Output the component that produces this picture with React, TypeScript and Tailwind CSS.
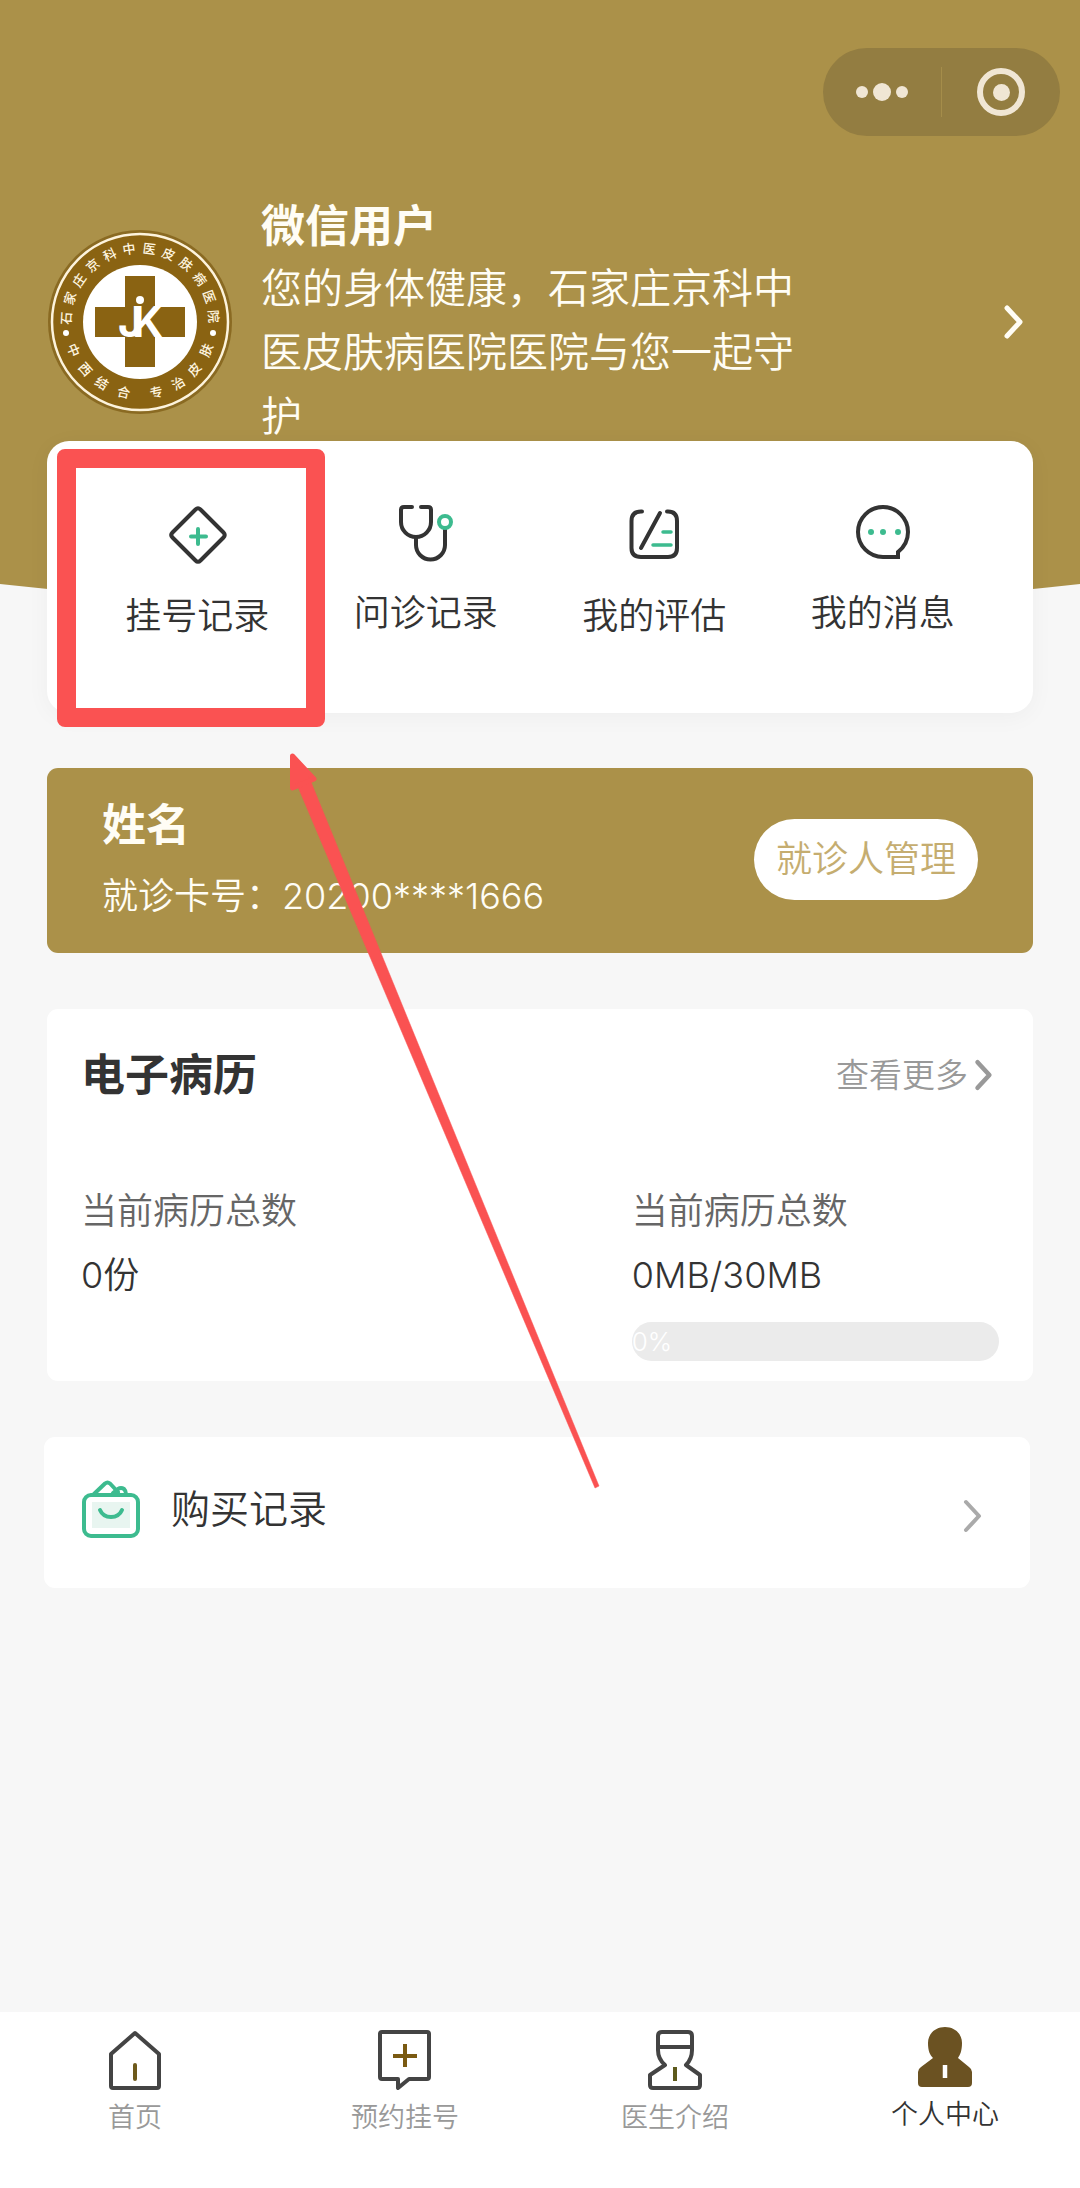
import type { ReactNode } from "react";

const INK = "#333333";
const GREEN = "#3dbb8f";

const TOP_RING = ["石", "家", "庄", "京", "科", "中", "医", "皮", "肤", "病", "医", "院"];
const BOTTOM_RING: [string, number][] = [
  ["中", 67],
  ["西", 49],
  ["结", 32],
  ["合", 13],
  ["专", -13],
  ["治", -32],
  ["皮", -49],
  ["肤", -67],
];

function HospitalLogo() {
  return (
    <svg viewBox="-92 -92 184 184" className="size-[184px] shrink-0" role="img" aria-label="石家庄京科中医皮肤病医院">
      <circle r="92" fill="#8a6a22" />
      <circle r="88" fill="#8a6312" stroke="#fdf3dc" strokeWidth="2.5" />
      <g fill="#fff6e0" fontSize="13" fontWeight="500" textAnchor="middle" fontFamily='"Noto Sans CJK SC", sans-serif'>
        {TOP_RING.map((ch, i) => (
          <text key={i} transform={`rotate(${-87 + i * 15.7})`} y="-69">
            {ch}
          </text>
        ))}
        {BOTTOM_RING.map(([ch, angle]) => (
          <text key={angle} transform={`rotate(${angle})`} y="77">
            {ch}
          </text>
        ))}
      </g>
      <circle cx="-74" cy="11" r="3" fill="#fff" />
      <circle cx="73" cy="11" r="3" fill="#fff" />
      <circle r="57" fill="#fff" />
      <path d="M-15-46H15V-15H45V15H15V45H-15V15H-45V-15H-15Z" fill="#8a6312" />
      <text x="-22" y="15" fill="#fff" fontSize="43" fontWeight="700" fontFamily="Inter, sans-serif">
        J<tspan dx="-11">K</tspan>
      </text>
      <circle cx="0" cy="-22" r="6" fill="#8a6312" />
      <circle cx="0" cy="-22" r="4" fill="#fff" />
    </svg>
  );
}

function Chevron({ className }: { className: string }) {
  return (
    <svg viewBox="0 0 24 44" fill="none" stroke="currentColor" strokeLinecap="round" strokeLinejoin="round" className={className}>
      <path d="M6 8L19 22L6 36" />
    </svg>
  );
}

function DiamondIcon() {
  return (
    <svg viewBox="0 0 60 60" fill="none" strokeWidth="4" strokeLinecap="round" strokeLinejoin="round" className="h-[60px] w-[60px]">
      <path d="M28.500 4.500Q31 2 33.500 4.500L56.500 27.500Q59 30 56.500 32.500L33.500 55.500Q31 58 28.500 55.500L5.500 32.500Q3 30 5.500 27.500Z" stroke={INK} />
      <path d="M31 24V39M24 31.500H39" stroke={GREEN} />
    </svg>
  );
}

function StethoscopeIcon() {
  return (
    <svg viewBox="0 0 60 57" fill="none" strokeWidth="4" strokeLinecap="round" strokeLinejoin="round" className="h-[57px] w-[60px]">
      <path d="M16 2H8Q5 2 5 5V17A15 15 0 0 0 35 17V5Q35 2 32 2H25" stroke={INK} />
      <path d="M20 33V40A14.500 14.500 0 0 0 49 40V25" stroke={INK} />
      <circle cx="49" cy="17" r="6" stroke={GREEN} />
    </svg>
  );
}

function ReviewIcon() {
  return (
    <svg viewBox="0 0 60 60" fill="none" strokeWidth="4" strokeLinecap="round" strokeLinejoin="round" className="h-[60px] w-[60px]">
      <path d="M18 6.500H17Q7.500 6.500 7.500 16V43Q7.500 52 17 52H44Q53 52 53 43V16Q53 6.500 44 6.500H43" stroke={INK} />
      <path d="M36 8L17 43" stroke={INK} />
      <path d="M39 27H47M29 40H47" stroke={GREEN} strokeWidth="3.500" />
    </svg>
  );
}

function MessageIcon() {
  return (
    <svg viewBox="0 0 60 57" fill="none" strokeWidth="4" className="h-[57px] w-[60px]">
      <path d="M45 52V47Q55 39 55 27A25 25 0 1 0 30 52Z" stroke={INK} />
      <g fill={GREEN}>
        <circle cx="18" cy="27" r="3" />
        <circle cx="30" cy="27" r="3" />
        <circle cx="45" cy="27" r="3" />
      </g>
    </svg>
  );
}

function BagIcon() {
  return (
    <svg viewBox="0 0 58 58" fill="none" stroke={GREEN} strokeWidth="4" strokeLinecap="round" strokeLinejoin="round" className="size-[58px] shrink-0">
      <path d="M12 14L23 3.500Q25.500 1.500 28 3.500L36 12" />
      <path d="M31 13L36 9Q39 7 42 9Q44 11 44 14" />
      <rect x="2" y="15" width="54" height="41" rx="7" fill="#fff" />
      <rect x="10" y="22" width="38" height="26" fill="#e8f5f0" stroke="none" />
      <path d="M18 30Q21 37 29 37Q37 37 40 30" />
    </svg>
  );
}

function HomeIcon() {
  return (
    <svg viewBox="0 0 60 60" fill="none" strokeWidth="4" strokeLinecap="round" strokeLinejoin="round" className="size-[60px]">
      <path d="M30 3L54 24V56Q54 58 52 58H8Q6 58 6 56V24Z" stroke="#444444" />
      <path d="M30 35V49" stroke="#6e5a1c" />
    </svg>
  );
}

function BookingIcon() {
  return (
    <svg viewBox="0 0 60 60" fill="none" strokeWidth="4" strokeLinejoin="round" className="size-[60px]">
      <path d="M7 2H52Q54 2 54 4V47Q54 49 52 49H34L23 58V49H7Q5 49 5 47V4Q5 2 7 2Z" stroke="#444444" />
      <path d="M30 14V37M18 26H42" stroke="#7a5a12" />
    </svg>
  );
}

function DoctorIcon() {
  return (
    <svg viewBox="0 0 60 60" fill="none" strokeWidth="4" strokeLinejoin="round" className="size-[60px]">
      <path d="M17 2H43Q47 2 47 6V20Q47 29 41 35L55 45V55Q55 58 52 58H8Q5 58 5 55V45L20 35Q13 29 13 20V6Q13 2 17 2Z" stroke="#444444" />
      <path d="M13 17H47" stroke="#444444" />
      <path d="M30 37V51" stroke="#5d5a1c" />
    </svg>
  );
}

function ProfileIcon() {
  return (
    <svg viewBox="0 0 60 60" className="size-[60px]">
      <path
        d="M30 0C40 0 47 7 47 16C47 24 45 28 43 31L54 40Q57 42 57 45V56Q57 60 53 60H7Q3 60 3 56V45Q3 42 6 40L18 31C15 28 13 24 13 16C13 7 20 0 30 0Z"
        fill="#6b5222"
      />
      <path d="M30 38V51" stroke="#fff" strokeWidth="4.500" />
    </svg>
  );
}

function Shortcut({ icon, label }: { icon: ReactNode; label: string }) {
  return (
    <button type="button" className="flex flex-1 flex-col items-center gap-[26px]">
      {icon}
      <span className="text-[36px] leading-[50px]">{label}</span>
    </button>
  );
}

function Tab({ icon, label, active }: { icon: ReactNode; label: string; active?: boolean }) {
  return (
    <a
      href="#"
      aria-current={active ? "page" : undefined}
      className={
        active
          ? "flex flex-1 flex-col items-center gap-2 pt-[15px] text-[#333333]"
          : "flex flex-1 flex-col items-center gap-2 pt-[18px] text-[#999999]"
      }
    >
      {icon}
      <span className="text-[27px] leading-[40px]">{label}</span>
    </a>
  );
}

function PointerArrow() {
  return (
    <svg
      viewBox="0 0 330 750"
      aria-hidden="true"
      className="pointer-events-none absolute top-[745px] left-[280px] z-20 h-[750px] w-[330px]"
      fill="#fa5252"
      stroke="#fa5252"
    >
      <path d="M18 42L31 37L319 741L315 743Z" strokeWidth="0.500" />
      <path d="M12.500 11L34 34L12.500 43Z" strokeWidth="5" strokeLinejoin="round" />
    </svg>
  );
}

export default function App() {
  return (
    <div className="relative flex min-h-screen flex-col overflow-hidden bg-[#f7f7f7] font-['Inter','Noto_Sans_CJK_SC',sans-serif] font-[350] text-[#333333]">
      <div className="absolute inset-x-0 top-0">
        <div className="h-[584px] bg-[#ab9149]" />
        <svg viewBox="0 0 1080 30" preserveAspectRatio="none" className="block h-[30px] w-full" aria-hidden="true">
          <path d="M0 0Q540 60 1080 0Z" fill="#ab9149" />
        </svg>
      </div>

      <header className="relative text-[#fffdf5]">
        <div className="flex justify-end pt-12 pr-5">
          <div className="flex h-[88px] w-[237px] items-center rounded-full bg-[#937d41] text-[#f0e6d4]">
            <button type="button" aria-label="更多" className="flex flex-1 items-center justify-center gap-[5px]">
              <span className="size-[12px] rounded-full bg-current" />
              <span className="size-[18px] rounded-full bg-current" />
              <span className="size-[12px] rounded-full bg-current" />
            </button>
            <span className="h-[50px] w-px bg-[#a58d4a]" />
            <button type="button" aria-label="关闭" className="flex flex-1 justify-center">
              <span className="flex size-[48px] items-center justify-center rounded-full border-6 border-current">
                <span className="size-[17px] rounded-full bg-current" />
              </span>
            </button>
          </div>
        </div>

        <button type="button" className="mt-[60px] flex w-full items-center gap-[29px] pr-[55px] pl-12 text-left">
          <HospitalLogo />
          <span className="flex max-w-[550px] flex-1 flex-col">
            <span className="text-[44px] leading-[60px] font-bold">微信用户</span>
            <span className="text-[41px] leading-[64px]">您的身体健康，石家庄京科中医皮肤病医院医院与您一起守护</span>
          </span>
          <Chevron className="ml-auto h-[44px] w-[24px] stroke-[5px]" />
        </button>
      </header>

      <main className="relative flex flex-col">
        <nav
          aria-label="快捷入口"
          className="relative mx-[47px] -mt-[7px] flex h-[272px] items-start rounded-[22px] bg-white px-9 pt-16 shadow-[0_4px_24px_rgba(0,0,0,0.04)]"
        >
          <Shortcut icon={<DiamondIcon />} label="挂号记录" />
          <Shortcut icon={<StethoscopeIcon />} label="问诊记录" />
          <Shortcut icon={<ReviewIcon />} label="我的评估" />
          <Shortcut icon={<MessageIcon />} label="我的消息" />
          <div className="pointer-events-none absolute top-[8px] left-[10px] h-[278px] w-[268px] rounded-lg border-[19px] border-[#fa5252]" />
        </nav>

        <section className="mx-[47px] mt-[55px] flex items-center justify-between rounded-[11px] bg-[#ab9149] px-[55px] pt-[27px] pb-[30px] text-[#fffdf5]">
          <div>
            <h2 className="text-[44px] leading-[60px] font-bold">姓名</h2>
            <p className="mt-[16px] pb-[2px] text-[36px] leading-[50px]">就诊卡号：20200****1666</p>
          </div>
          <button type="button" className="h-[81px] rounded-full bg-white px-[22px] text-[36px] text-[#c5ad70]">
            就诊人管理
          </button>
        </section>

        <section className="mx-[47px] mt-[56px] rounded-[11px] bg-white px-[34px] pt-[36px] pb-[20px]">
          <div className="flex items-center justify-between">
            <h2 className="text-[44px] leading-[60px] font-bold">电子病历</h2>
            <a href="#" className="flex items-center gap-1 pr-[5px] text-[33px] leading-[50px] text-[#999999]">
              查看更多
              <Chevron className="h-[40px] w-[22px] stroke-[5px]" />
            </a>
          </div>
          <div className="mt-[81px] flex">
            <div className="w-3/5">
              <p className="text-[36px] leading-[50px] text-[#666666]">当前病历总数</p>
              <p className="mt-[14px] text-[36px] leading-[50px]">0份</p>
            </div>
            <div className="w-2/5">
              <p className="text-[36px] leading-[50px] text-[#666666]">当前病历总数</p>
              <p className="mt-[14px] text-[36px] leading-[50px]">0MB/30MB</p>
              <div
                role="progressbar"
                aria-label="存储空间"
                aria-valuenow={0}
                aria-valuemin={0}
                aria-valuemax={100}
                className="mt-[22px] h-[39px] overflow-hidden rounded-full bg-[#ebebeb] text-[26px] leading-[39px] text-white"
              >
                0%
              </div>
            </div>
          </div>
        </section>

        <button type="button" className="mt-[56px] mr-[50px] ml-[44px] flex items-center rounded-[11px] bg-white pt-[43px] pr-[46px] pb-[50px] pl-[38px] text-left">
          <BagIcon />
          <span className="ml-[31px] text-[39px] leading-[54px]">购买记录</span>
          <Chevron className="ml-auto h-[44px] w-[24px] self-end stroke-[4px] text-[#aaaaaa]" />
        </button>
      </main>

      <nav aria-label="主导航" className="relative mt-auto flex h-[176px] bg-white">
        <Tab icon={<HomeIcon />} label="首页" />
        <Tab icon={<BookingIcon />} label="预约挂号" />
        <Tab icon={<DoctorIcon />} label="医生介绍" />
        <Tab icon={<ProfileIcon />} label="个人中心" active />
      </nav>

      <PointerArrow />
    </div>
  );
}
